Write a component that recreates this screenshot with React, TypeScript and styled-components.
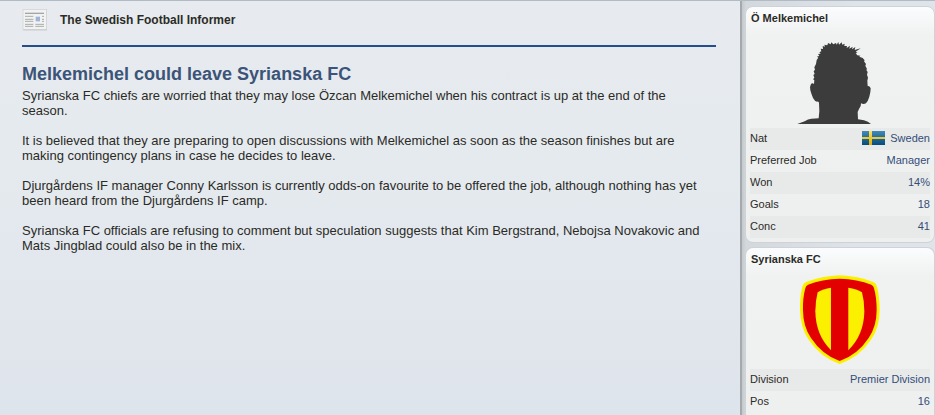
import React from "react";
import styled, { createGlobalStyle } from "styled-components";

const GlobalStyle = createGlobalStyle`
  *, *::before, *::after { box-sizing: border-box; }
  html, body { margin: 0; height: 100%; overflow: hidden; }
  body {
    background: #dfe5ec;
    color: #2b2b26;
    font-family: "Liberation Sans", Arial, sans-serif;
    font-size: 13px;
    line-height: 15px;
  }
  h1, h2, p, dl, dd, dt { margin: 0; }
`;

const Page = styled.div`
  display: grid;
  grid-template-columns: minmax(0, 1fr) 195px;
  min-height: 100vh;
  border-top: 1px solid #b1bbc5;
`;

const Article = styled.main`
  padding: 8px 24px 24px 22px;
  background: linear-gradient(#e7ebef, #e5eaef 40%, #dee4eb);
`;

const Masthead = styled.header`
  display: flex;
  align-items: center;
  gap: 12px;
  height: 38px;
  padding-bottom: 14px;
  border-bottom: 2px solid #264d8c;
  font-size: 12px;
  font-weight: 700;
`;

const Headline = styled.h1`
  margin: 15px 0 2px;
  color: #3b5478;
  font-size: 18px;
  line-height: 24px;
  font-weight: 700;
`;

const Story = styled.div`
  display: flex;
  flex-direction: column;
  gap: 15px;
  padding-right: 8px;
`;

const Sidebar = styled.aside`
  display: flex;
  flex-direction: column;
  gap: 4px;
  padding: 5px 0 0 3px;
  border-left: 2px solid #a3a9ad;
  background: linear-gradient(90deg, #c4c9cd, #d3d8dd 4px, #dee4ea 60%);
`;

const Card = styled.section<{ $fill?: boolean }>`
  flex: ${(p) => (p.$fill ? "1 0 auto" : "0 0 auto")};
  padding: 0 4px 4px;
  border: 1px solid #cfd3d6;
  border-bottom-width: ${(p) => (p.$fill ? "0" : "1px")};
  border-radius: ${(p) => (p.$fill ? "8px 8px 0 0" : "8px")};
  background: linear-gradient(#fbfcfd, #f0f2f2 28px, #eef0f0);
`;

const CardTitle = styled.h2`
  padding: 4px 1px 0;
  font-size: 11px;
  line-height: 15px;
  font-weight: 700;
`;

const Portrait = styled.figure`
  display: flex;
  justify-content: center;
  margin: 0;
  padding: 9px 0 4px;
`;

const Emblem = styled(Portrait)`
  padding: 3px 0 4px;
`;

const Facts = styled.dl`
  font-size: 11px;
  line-height: 20px;
`;

const Fact = styled.div`
  display: flex;
  align-items: flex-start;
  justify-content: space-between;
  height: 22px;
  &:nth-child(odd) { background: #e8eaea; }
`;

const Value = styled.dd`
  display: flex;
  align-items: center;
  gap: 5px;
  color: #344d78;
`;

const ValueLink = styled.a`
  color: inherit;
  text-decoration: none;
`;

const NewspaperIcon = () => (
  <svg width="26" height="22" viewBox="0 0 78 66" aria-hidden="true">
    <rect x="4" y="2" width="71" height="62" fill="#b9bcbf" />
    <rect x="3" y="1" width="71" height="60" fill="#f1f2f2" stroke="#cfd1d3" strokeWidth="2" />
    <path d="M9 13H66" stroke="#a3a6a8" strokeWidth="4" />
    <path d="M9 22H34M9 31H34M9 37H34M9 46H34M9 52H34M60 22H66M60 31H66M60 37H66M40 46H66M40 52H66" stroke="#a9abad" strokeWidth="3" />
    <rect x="41" y="23" width="13" height="14" fill="#9fb4d8" />
  </svg>
);

const Silhouette = () => (
  <svg width="90" height="89" viewBox="15 15 270 267" role="img" aria-label="Özcan Melkemichel">
    <path
      fill="#3c3c3c"
      d="M22 282 L44 274 Q54 267 64 266 L86 265 L88 244 L87 218 Q85 214 81 215 Q74 214 69 204 Q64 192 61 181 Q59 168 63 162 Q67 158 72 162 L73 150 L69 148 L73 143 L70 135 L74 132 L71 124 L75 119 L73 112 L78 102 L80 90 L85 83 L81 80 L88 77 L84 72 L92 71 L88 67 L94 64 L92 56 L99 57 L98 48 L105 50 L103 44 L112 46 L114 39 L122 43 L124 37 L130 43 L138 39 L140 44 L145 36 L147 44 L155 37 L157 44 L164 41 L163 48 L171 48 L170 54 L180 47 L178 56 L188 50 L186 58 L196 51 L194 60 L212 55 L197 65 L203 69 L197 70 L202 76 L211 77 L208 80 L218 84 L224 91 L222 94 L228 102 L226 107 L231 117 L229 120 L233 126 L231 134 L234 143 L232 152 L233 168 Q239 167 242 175 Q242 187 238 200 Q234 213 228 220 Q221 224 213 220 Q214 230 207 237 L203 246 L204 268 L222 271 Q235 274 243 282 Z"
    />
  </svg>
);

const Crest = () => (
  <svg width="90" height="95" viewBox="15 0 270 285" role="img" aria-label="Syrianska FC">
    <path
      fill="#fbf000"
      d="M149 16 Q95 18 48 36 Q39 40 37 50 Q29 80 30 120 Q31 171 55 208 Q92 263 149 282 Q207 263 244 208 Q269 171 269 120 Q269 79 261 50 Q259 40 250 36 Q205 18 149 16Z"
    />
    <path
      fill="#e20000"
      d="M149 26 Q96 27 54 44 Q47 47 46 55 Q38 84 39 120 Q39 169 63 204 Q97 255 149 273 Q202 255 236 204 Q260 169 260 120 Q260 83 252 55 Q251 47 244 44 Q202 27 149 26Z"
    />
    <path fill="#fbf000" d="M123 53 Q99 56 83 67 Q76 93 76 124 Q77 195 123 241Z" />
    <path fill="#fbf000" d="M175 53 Q200 56 216 67 Q223 93 223 124 Q222 195 175 241Z" />
  </svg>
);

const SwedenFlag = () => (
  <svg width="23" height="14" viewBox="0 0 23 14" aria-hidden="true">
    <defs>
      <linearGradient id="flagBlue" x1="0" y1="0" x2="0" y2="1">
        <stop offset="0" stopColor="#438bb5" />
        <stop offset="1" stopColor="#064b7c" />
      </linearGradient>
      <linearGradient id="flagGold" x1="0" y1="0" x2="0" y2="1">
        <stop offset="0" stopColor="#ffe066" />
        <stop offset="1" stopColor="#dcb000" />
      </linearGradient>
    </defs>
    <rect width="23" height="14" fill="url(#flagBlue)" />
    <path d="M7 0h3v6h13v2H10v6H7V8H0V6h7z" fill="url(#flagGold)" />
  </svg>
);

const story = [
  "Syrianska FC chiefs are worried that they may lose Özcan Melkemichel when his contract is up at the end of the season.",
  "It is believed that they are preparing to open discussions with Melkemichel as soon as the season finishes but are making contingency plans in case he decides to leave.",
  "Djurgårdens IF manager Conny Karlsson is currently odds-on favourite to be offered the job, although nothing has yet been heard from the Djurgårdens IF camp.",
  "Syrianska FC officials are refusing to comment but speculation suggests that Kim Bergstrand, Nebojsa Novakovic and Mats Jingblad could also be in the mix.",
];

export default function App() {
  return (
    <>
      <GlobalStyle />
      <Page>
        <Article>
          <Masthead>
            <NewspaperIcon />
            <span>The Swedish Football Informer</span>
          </Masthead>
          <Headline>Melkemichel could leave Syrianska FC</Headline>
          <Story>
            {story.map((text) => (
              <p key={text}>{text}</p>
            ))}
          </Story>
        </Article>
        <Sidebar>
          <Card>
            <CardTitle>Ö Melkemichel</CardTitle>
            <Portrait>
              <Silhouette />
            </Portrait>
            <Facts>
              <Fact>
                <dt>Nat</dt>
                <Value>
                  <SwedenFlag />
                  <ValueLink href="#sweden">Sweden</ValueLink>
                </Value>
              </Fact>
              <Fact>
                <dt>Preferred Job</dt>
                <Value>Manager</Value>
              </Fact>
              <Fact>
                <dt>Won</dt>
                <Value>14%</Value>
              </Fact>
              <Fact>
                <dt>Goals</dt>
                <Value>18</Value>
              </Fact>
              <Fact>
                <dt>Conc</dt>
                <Value>41</Value>
              </Fact>
            </Facts>
          </Card>
          <Card $fill>
            <CardTitle>Syrianska FC</CardTitle>
            <Emblem>
              <Crest />
            </Emblem>
            <Facts>
              <Fact>
                <dt>Division</dt>
                <Value>
                  <ValueLink href="#premier-division">Premier Division</ValueLink>
                </Value>
              </Fact>
              <Fact>
                <dt>Pos</dt>
                <Value>16</Value>
              </Fact>
            </Facts>
          </Card>
        </Sidebar>
      </Page>
    </>
  );
}
